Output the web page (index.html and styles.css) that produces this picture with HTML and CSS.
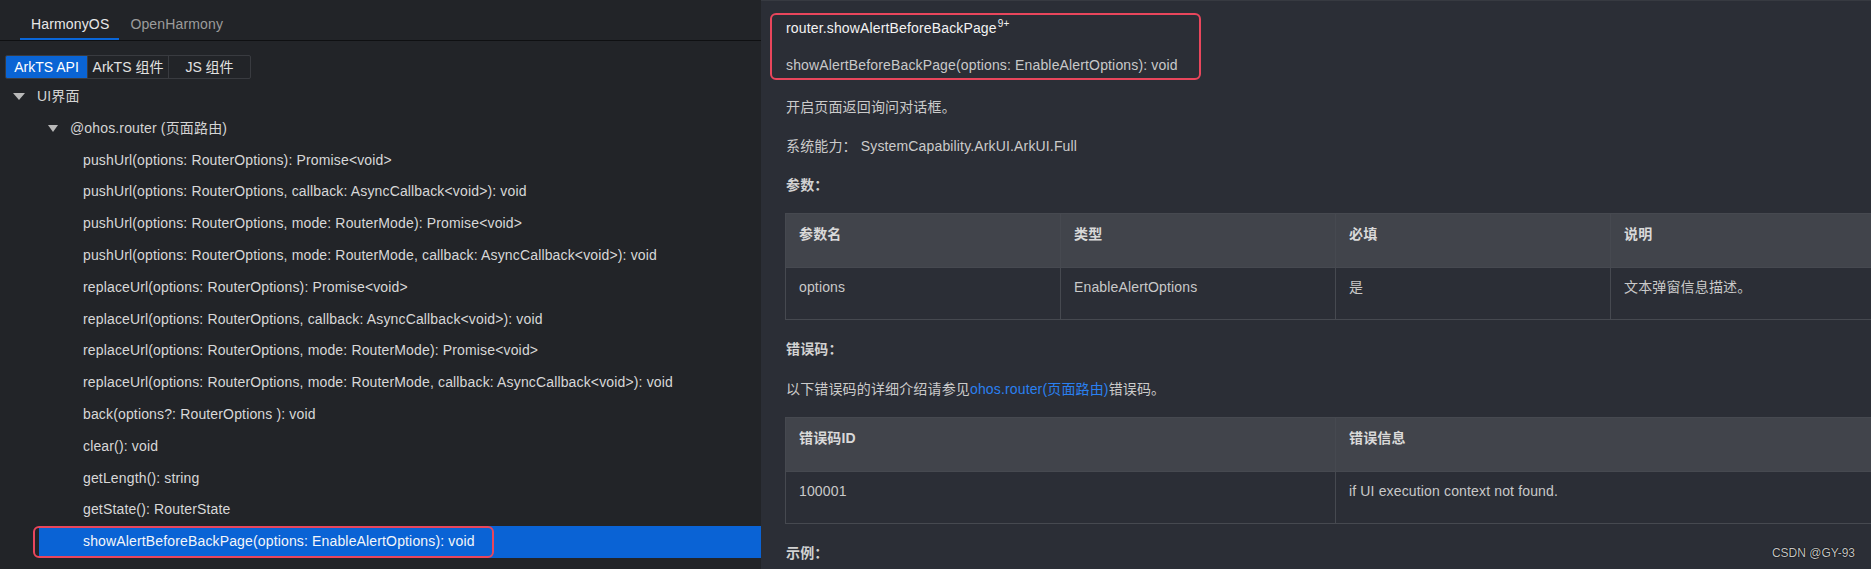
FILE: index.html
```html
<!DOCTYPE html>
<html lang="zh-CN">
<head>
<meta charset="utf-8">
<title>router.showAlertBeforeBackPage</title>
<link rel="stylesheet" href="styles.css">
</head>
<body class="page">
  <aside class="sidebar">
    <nav class="tabs">
      <span class="tab tab-active">HarmonyOS</span>
      <span class="tab">OpenHarmony</span>
    </nav>
    <div class="seg">
      <span class="seg-item seg-a seg-active">ArkTS API</span>
      <span class="seg-item seg-b">ArkTS 组件</span>
      <span class="seg-item seg-c">JS 组件</span>
    </div>
    <ul class="tree">
      <li class="node lvl0"><span class="caret"></span>UI界面</li>
      <li class="node lvl1"><span class="caret caret-sm"></span>@ohos.router (页面路由)</li>
      <li class="leaf">pushUrl(options: RouterOptions): Promise&lt;void&gt;</li>
      <li class="leaf">pushUrl(options: RouterOptions, callback: AsyncCallback&lt;void&gt;): void</li>
      <li class="leaf">pushUrl(options: RouterOptions, mode: RouterMode): Promise&lt;void&gt;</li>
      <li class="leaf">pushUrl(options: RouterOptions, mode: RouterMode, callback: AsyncCallback&lt;void&gt;): void</li>
      <li class="leaf">replaceUrl(options: RouterOptions): Promise&lt;void&gt;</li>
      <li class="leaf">replaceUrl(options: RouterOptions, callback: AsyncCallback&lt;void&gt;): void</li>
      <li class="leaf">replaceUrl(options: RouterOptions, mode: RouterMode): Promise&lt;void&gt;</li>
      <li class="leaf">replaceUrl(options: RouterOptions, mode: RouterMode, callback: AsyncCallback&lt;void&gt;): void</li>
      <li class="leaf">back(options?: RouterOptions ): void</li>
      <li class="leaf">clear(): void</li>
      <li class="leaf">getLength(): string</li>
      <li class="leaf">getState(): RouterState</li>
      <li class="leaf leaf-selected">showAlertBeforeBackPage(options: EnableAlertOptions): void<span class="mark mark-tree"></span></li>
    </ul>
  </aside>

  <main class="content">
    <span class="mark mark-head"></span>
    <h1 class="api-title">router.showAlertBeforeBackPage<sup class="ver">9+</sup></h1>
    <p class="api-sig">showAlertBeforeBackPage(options: EnableAlertOptions): void</p>
    <p class="desc">开启页面返回询问对话框。</p>
    <p class="syscap"><span class="syscap-label">系统能力：</span>SystemCapability.ArkUI.ArkUI.Full</p>
    <p class="label label-params">参数：</p>
    <table class="doc-table t-params">
      <colgroup><col class="c4"><col class="c4"><col class="c4"><col class="c4"></colgroup>
      <tr class="thead-row"><th>参数名</th><th>类型</th><th>必填</th><th>说明</th></tr>
      <tr class="tbody-row"><td>options</td><td>EnableAlertOptions</td><td>是</td><td>文本弹窗信息描述。</td></tr>
    </table>
    <p class="label label-err">错误码：</p>
    <p class="err-intro">以下错误码的详细介绍请参见<a class="link">ohos.router(页面路由)</a>错误码。</p>
    <table class="doc-table t-errors">
      <colgroup><col class="c2"><col class="c2"></colgroup>
      <tr class="thead-row"><th>错误码ID</th><th>错误信息</th></tr>
      <tr class="tbody-row"><td>100001</td><td>if UI execution context not found.</td></tr>
    </table>
    <p class="label label-example">示例：</p>
    <span class="credit">CSDN @GY-93</span>
  </main>
</body>
</html>
```

FILE: styles.css
```css
html, body {
  margin: 0;
  padding: 0;
}

.page {
  display: flex;
  width: 1871px;
  height: 569px;
  overflow: hidden;
  font-family: "Liberation Sans", "Noto Sans CJK SC", sans-serif;
  font-size: 14px;
  letter-spacing: 0.15px;
  color: #d6d6d6;
  background: #2b2e36;
}

/* ---------- sidebar ---------- */
.sidebar {
  width: 761px;
  flex: 0 0 761px;
  background: #222428;
  display: flex;
  flex-direction: column;
}

.tabs {
  display: flex;
  height: 40px;
  padding-left: 20px;
  border-bottom: 1px solid #0f1012;
}

.tab {
  box-sizing: border-box;
  height: 40px;
  padding: 14px 10px 0 11px;
  line-height: 20px;
  color: #9c9c9c;
  border-bottom: 2px solid transparent;
}

.tab-active {
  color: #e8e8e8;
  border-bottom-color: #0a66d8;
}

.seg {
  display: flex;
  align-self: flex-start;
  margin: 14px 0 0 5px;
  height: 24px;
  box-sizing: border-box;
  border: 1px solid #393b40;
  border-radius: 2px;
  overflow: hidden;
}

.seg-item {
  display: block;
  text-align: center;
  line-height: 22px;
  color: #e2e2e2;
  letter-spacing: 0;
}

.seg-a { width: 81px; }
.seg-b { width: 80px; border-left: 1px solid #393b40; }
.seg-c { width: 81px; border-left: 1px solid #393b40; }

.seg-active {
  background: #0a64d4;
  color: #ffffff;
}

.tree {
  list-style: none;
  margin: 2px 0 0 0;
  padding: 0;
}

.tree li {
  height: 31.8px;
  line-height: 31.8px;
  white-space: nowrap;
}

.node {
  display: flex;
  align-items: center;
  color: #d4d4d4;
}

.lvl0 { padding-left: 13px; }
.lvl1 { padding-left: 48px; }

.caret {
  display: inline-block;
  width: 0;
  height: 0;
  border-left: 6px solid transparent;
  border-right: 6px solid transparent;
  border-top: 7px solid #b9b9b9;
  margin-right: 12px;
}

.caret-sm {
  border-left-width: 5.5px;
  border-right-width: 5.5px;
  margin-right: 12px;
}

.leaf {
  margin-left: 39px;
  padding-left: 44px;
  color: #d8d8d8;
  position: relative;
}

.leaf-selected {
  background: #0a63d5;
  color: #f4f6fa;
}

/* red annotation frames drawn over content */
.mark {
  position: absolute;
  box-sizing: border-box;
  border: 2.5px solid #e9465c;
  border-radius: 6px;
  pointer-events: none;
}

.mark-tree {
  left: -6px;
  top: 0;
  width: 461px;
  height: 32px;
}

.mark-head {
  left: 9px;
  top: 12px;
  width: 431px;
  height: 67px;
}

/* ---------- content ---------- */
.content {
  position: relative;
  flex: 1 1 auto;
  min-width: 0;
  overflow: hidden;
  box-sizing: border-box;
  border-top: 1px solid #373a41;
  padding: 17px 0 0 25px;
  background: #2b2e36;
  color: #cbcbcb;
}

.content p,
.content h1 {
  margin: 0;
  line-height: 20px;
}

.api-title {
  font-size: 14px;
  font-weight: normal;
  color: #f3f3f3;
  margin-bottom: 17px !important;
}

.ver {
  font-size: 10px;
  line-height: 0;
  vertical-align: 6px;
  margin-left: 1px;
}

.api-sig {
  color: #c9c9c9;
  margin-bottom: 22px !important;
}

.desc {
  margin-bottom: 19px !important;
}

.syscap {
  margin-bottom: 19px !important;
}

.syscap-label {
  margin-right: 4px;
}

.label {
  font-weight: bold;
  color: #d2d2d2;
}

.label-params { margin-bottom: 18px !important; }
.label-err { margin-bottom: 20px !important; }

.err-intro {
  margin-bottom: 18px !important;
}

.link {
  color: #2a80f0;
  text-decoration: none;
}

.doc-table {
  border-collapse: collapse;
  table-layout: fixed;
  margin-left: -1px;
  margin-bottom: 19px;
}

.t-params { width: 1100px; }
.t-errors { width: 1100px; }

.c4 { width: 275px; }
.c2 { width: 550px; }

.doc-table th,
.doc-table td {
  border: 1px solid #464950;
  text-align: left;
  vertical-align: top;
  padding: 10px 14px 0 13px;
  line-height: 20px;
}

.doc-table th {
  background: #41444b;
  font-weight: bold;
  color: #d9d9d9;
}

.doc-table td {
  color: #c9c9c9;
  padding-top: 9px;
}

.thead-row { height: 54px; }
.tbody-row { height: 52px; }

.credit {
  position: absolute;
  right: 16px;
  bottom: 9px;
  font-size: 12px;
  line-height: 14px;
  letter-spacing: 0;
  color: #c4c4c4;
  text-shadow: 0 0 1px #000, 0 0 1px #000;
}
```
